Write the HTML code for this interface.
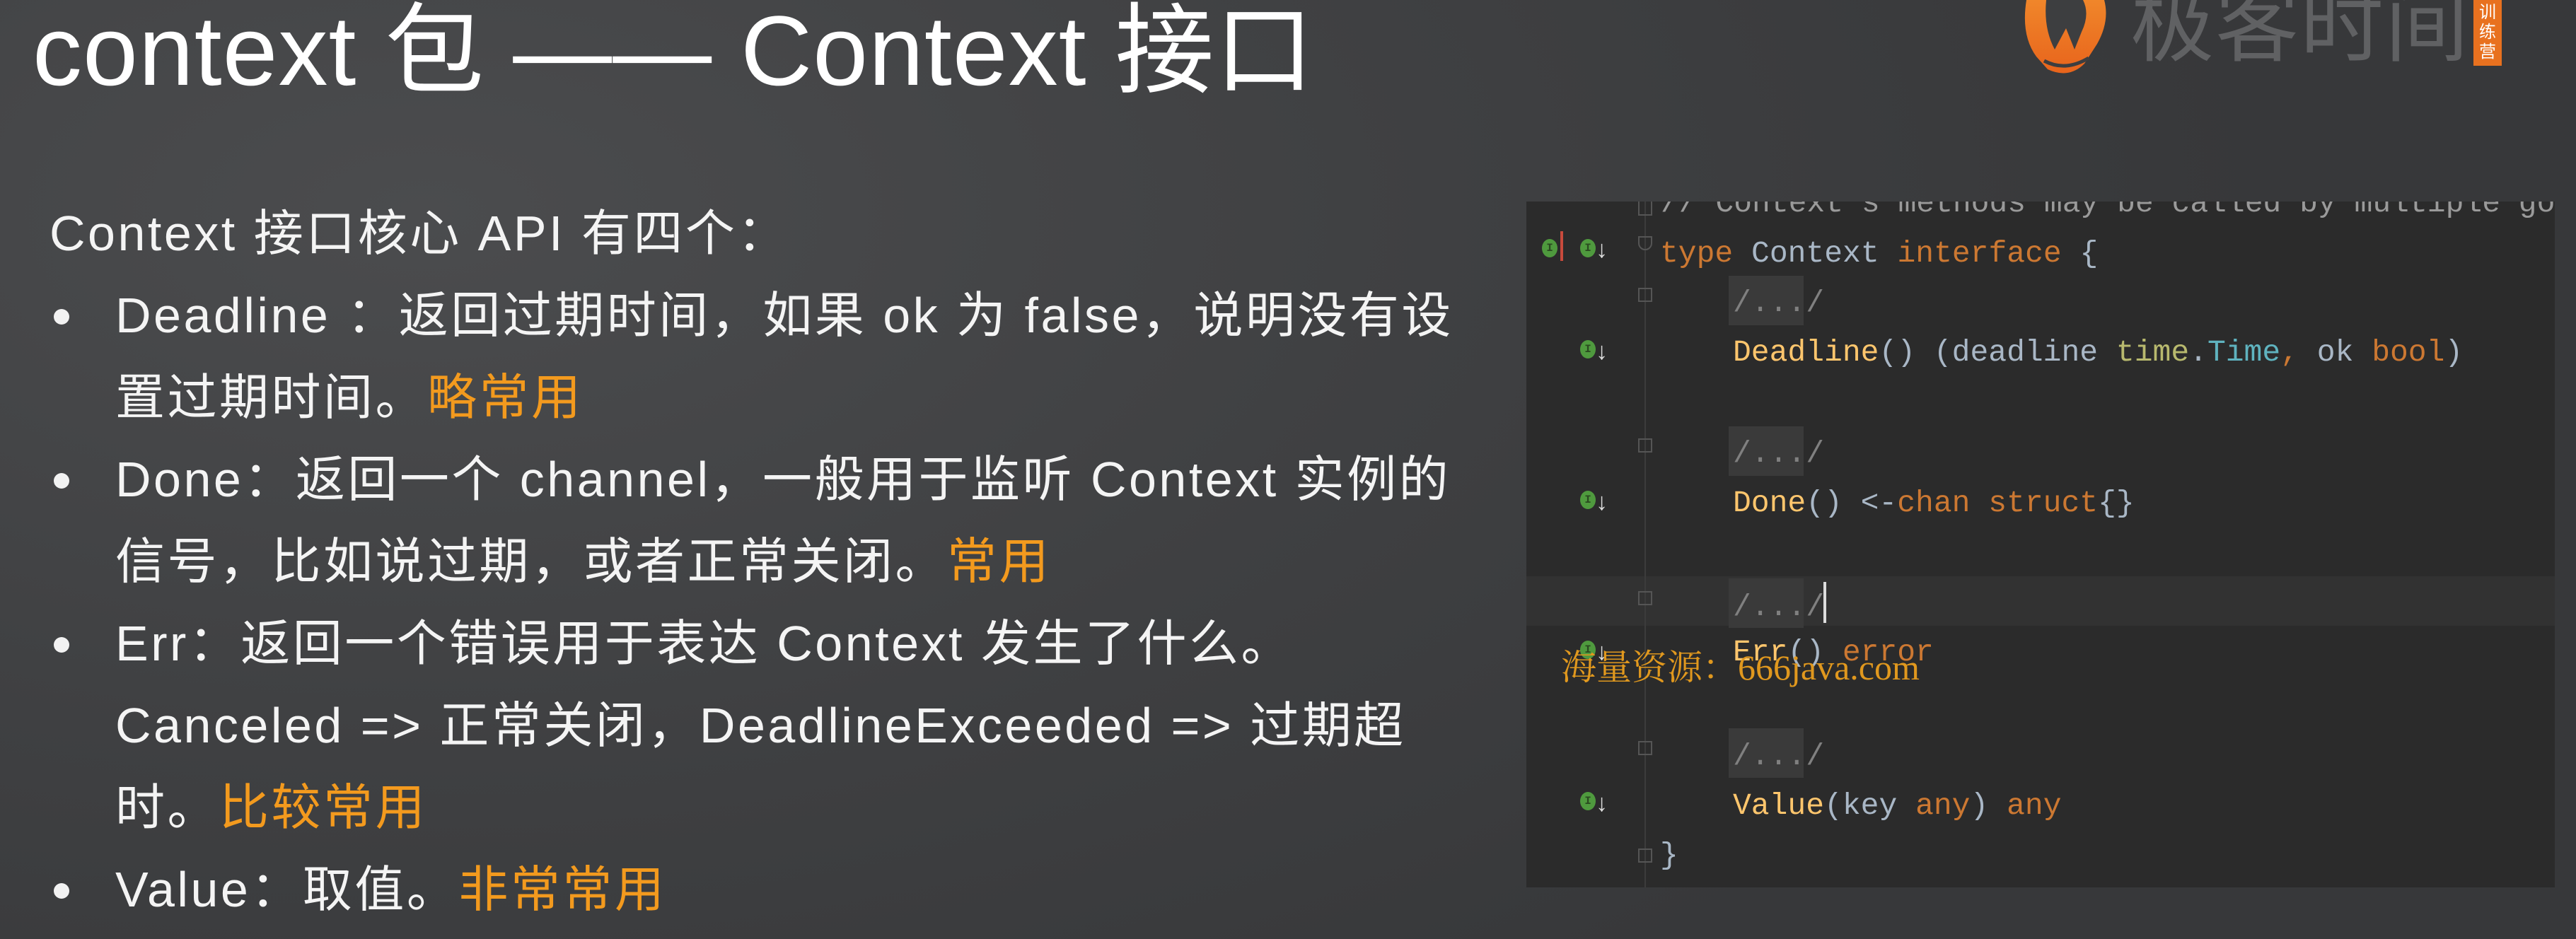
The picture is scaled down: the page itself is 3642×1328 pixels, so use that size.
<!DOCTYPE html>
<html><head><meta charset="utf-8">
<style>
*{margin:0;padding:0;box-sizing:border-box}
body{width:3642px;height:1328px;overflow:hidden;position:relative;
background:radial-gradient(ellipse 2600px 1400px at 600px 300px,#4b4c4e 0%,#3f4042 55%,#37383a 100%);
font-family:"Liberation Sans","Noto Sans CJK SC",sans-serif;color:#fff}
.t{position:absolute;white-space:nowrap}
.title{left:46px;top:-8px;font-size:140px;line-height:160px;letter-spacing:1px}
.ln{position:absolute;left:163px;font-size:70px;line-height:80px;letter-spacing:3.5px;white-space:nowrap;color:#f4f4f4}
.o{color:#f39a1e}
.dot{position:absolute;left:76px;width:22px;height:22px;border-radius:50%;background:#f2f2f2}
.code{position:absolute;left:2158px;top:285px;width:1454px;height:970px;background:#2b2b2b;overflow:hidden}
.c{position:absolute;font-family:"Liberation Mono","DejaVu Sans Mono",monospace;font-size:43px;line-height:50px;white-space:nowrap;color:#a9b7c6}
.k{color:#cc7832}.f{color:#ffc66d}.ty{color:#5fb3bf}.pk{color:#b8b96e}
.fold{position:absolute;left:286px;width:106px;height:70px;background:#3a3a3a}
.box{position:absolute;left:158px;width:20px;height:20px;border:2px solid #555}
.ic{position:absolute;width:22px;height:26px;border-radius:50%;background:#4f9a3e;color:#2a4a20;font:bold 16px/26px "Liberation Mono",monospace;text-align:center}
.ar{position:absolute;color:#ddd;font-size:34px;line-height:40px}
</style></head><body>
<div class="t title">context 包 —— Context 接口</div>

<!-- logo -->
<svg class="t" style="left:2855px;top:0" width="132" height="112" viewBox="0 0 132 112">
<defs><linearGradient id="g" x1="0" y1="0" x2="0" y2="1"><stop offset="0" stop-color="#f0862a"/><stop offset="1" stop-color="#e8641c"/></linearGradient></defs>
<path d="M10 0 H120 Q128 30 110 62 L92 90 Q70 112 40 98 L24 80 Q2 50 10 0Z" fill="url(#g)"/>
<path d="M38 0 H90 Q100 20 88 45 L78 70 L66 40 L50 70 Q34 40 38 0Z" fill="#3d3e40"/>
<path d="M35 86 Q65 102 98 82" stroke="#3d3e40" stroke-width="5" fill="none"/>
</svg>
<div class="t" style="left:3012px;top:-38px;font-size:118px;line-height:150px;color:#606163;letter-spacing:2px">极客时间</div>
<div class="t" style="left:3497px;top:0;width:40px;height:93px;background:#e8711f;color:#fff;font-size:24px;line-height:28px;text-align:center;padding-top:4px;white-space:normal">训<br>练<br>营</div>

<!-- text -->
<div class="ln" style="left:70px;top:290px">Context 接口核心 API 有四个：</div>
<div class="dot" style="top:437px"></div>
<div class="ln" style="top:406px">Deadline ：返回过期时间，如果 ok 为 false，说明没有设</div>
<div class="ln" style="top:522px">置过期时间。<span class="o">略常用</span></div>
<div class="dot" style="top:669px"></div>
<div class="ln" style="top:638px">Done：返回一个 channel，一般用于监听 Context 实例的</div>
<div class="ln" style="top:754px">信号，比如说过期，或者正常关闭。<span class="o">常用</span></div>
<div class="dot" style="top:901px"></div>
<div class="ln" style="top:870px">Err：返回一个错误用于表达 Context 发生了什么。</div>
<div class="ln" style="top:986px">Canceled =&gt; 正常关闭，DeadlineExceeded =&gt; 过期超</div>
<div class="ln" style="top:1102px">时。<span class="o">比较常用</span></div>
<div class="dot" style="top:1249px"></div>
<div class="ln" style="top:1218px">Value：取值。<span class="o">非常常用</span></div>

<!-- code panel -->
<div class="code">
<div class="t" style="left:0;top:530px;width:1454px;height:70px;background:#323232"></div>
<div class="t" style="left:167px;top:0;width:2px;height:970px;background:#3c3c3c"></div>
<div class="c" style="left:190px;top:-22px;color:#9a9a9a">// Context's methods may be called by multiple gor</div>
<div class="fold" style="top:105px"></div>
<div class="fold" style="top:318px"></div>
<div class="fold" style="top:533px"></div>
<div class="fold" style="top:745px"></div>
<div class="box" style="top:122px"></div>
<div class="box" style="top:335px"></div>
<div class="box" style="top:551px"></div>
<div class="box" style="top:763px"></div>
<div class="box" style="top:915px"></div>
<div class="box" style="top:0;border-top:none"></div>
<div class="box" style="top:49px;border-radius:0 0 10px 10px"></div>

<div class="c" style="left:189px;top:49px"><span class="k">type</span> Context <span class="k">interface</span> {</div>
<div class="c" style="left:292px;top:119px;color:#808080">/.../</div>
<div class="c" style="left:292px;top:189px"><span class="f">Deadline</span>() (deadline <span class="pk">time</span>.<span class="ty">Time</span><span class="k">,</span> ok <span class="k">bool</span>)</div>
<div class="c" style="left:292px;top:332px;color:#808080">/.../</div>
<div class="c" style="left:292px;top:402px"><span class="f">Done</span>() &lt;-<span class="k">chan struct</span>{}</div>
<div class="c" style="left:292px;top:549px;color:#808080">/.../</div>
<div class="t" style="left:420px;top:538px;width:4px;height:58px;background:#ddd"></div>
<div class="c" style="left:292px;top:613px"><span class="f">Err</span>() <span class="k">error</span></div>
<div class="c" style="left:292px;top:760px;color:#808080">/.../</div>
<div class="c" style="left:292px;top:830px"><span class="f">Value</span>(key <span class="k">any</span>) <span class="k">any</span></div>
<div class="c" style="left:189px;top:900px">}</div>

<div class="ic" style="left:22px;top:53px">I</div>
<div class="t" style="left:48px;top:42px;width:4px;height:42px;background:#c84a3c"></div>
<div class="ic" style="left:76px;top:53px">I</div>
<div class="ar" style="left:98px;top:48px">↓</div>
<div class="ic" style="left:76px;top:196px">I</div>
<div class="ar" style="left:98px;top:192px">↓</div>
<div class="ic" style="left:76px;top:409px">I</div>
<div class="ar" style="left:98px;top:405px">↓</div>
<div class="ic" style="left:76px;top:621px">I</div>
<div class="ar" style="left:98px;top:617px">↓</div>
<div class="ic" style="left:76px;top:835px">I</div>
<div class="ar" style="left:98px;top:831px">↓</div>
</div>

<!-- watermark -->
<div class="t" style="left:2207px;top:912px;font-family:'Liberation Serif','Noto Serif CJK SC',serif;font-size:50px;line-height:64px;color:#e0981e">海量资源：666java.com</div>
</body></html>
